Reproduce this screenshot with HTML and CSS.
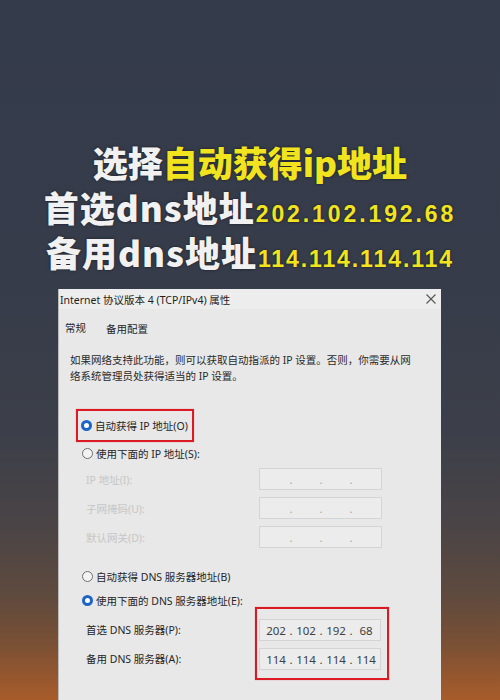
FILE: index.html
```html
<!DOCTYPE html>
<html lang="zh-CN">
<head>
<meta charset="utf-8">
<title>IPv4 属性</title>
<link rel="stylesheet" href="styles.css">
</head>
<body>
<div class="page">
  <header class="headline">
    <p class="line"><span class="w">选择</span><span class="y">自动获得ip地址</span></p>
    <p class="line"><span class="w wide">首选dns地址</span><span class="y num">202.102.192.68</span></p>
    <p class="line"><span class="w wide">备用dns地址</span><span class="y num num15">114.114.114.114</span></p>
  </header>

  <section class="dialog">
    <div class="titlebar">
      <span class="title">Internet 协议版本 4 (TCP/IPv4) 属性</span>
      <svg class="close" width="10" height="10" viewBox="0 0 10 10"><path d="M0.5 0.5L9.5 9.5M9.5 0.5L0.5 9.5" stroke="#555" stroke-width="1.1" fill="none"/></svg>
    </div>
    <div class="tabs">
      <span class="tab">常规</span>
      <span class="tab tab2">备用配置</span>
    </div>
    <p class="desc">如果网络支持此功能，则可以获取自动指派的 IP 设置。否则，你需要从网<br>络系统管理员处获得适当的 IP 设置。</p>

    <div class="hl hl1">
      <div class="radio-row"><span class="radio on"></span><span>自动获得 IP 地址(O)</span></div>
    </div>
    <div class="radio-row r2"><span class="radio"></span><span>使用下面的 IP 地址(S):</span></div>

    <div class="fields">
      <div class="field"><span class="label dis">IP 地址(I):</span><div class="ip dis"><i></i><b>.</b><i></i><b>.</b><i></i><b>.</b><i></i></div></div>
      <div class="field"><span class="label dis">子网掩码(U):</span><div class="ip dis"><i></i><b>.</b><i></i><b>.</b><i></i><b>.</b><i></i></div></div>
      <div class="field"><span class="label dis">默认网关(D):</span><div class="ip dis"><i></i><b>.</b><i></i><b>.</b><i></i><b>.</b><i></i></div></div>
    </div>

    <div class="radio-row r3"><span class="radio"></span><span>自动获得 DNS 服务器地址(B)</span></div>
    <div class="radio-row r4"><span class="radio on"></span><span>使用下面的 DNS 服务器地址(E):</span></div>

    <div class="dns">
      <div class="dns-labels">
        <span class="label">首选 DNS 服务器(P):</span>
        <span class="label">备用 DNS 服务器(A):</span>
      </div>
      <div class="hl hl2">
        <div class="ip"><i>202</i><b>.</b><i>102</i><b>.</b><i>192</i><b>.</b><i>68</i></div>
        <div class="ip"><i>114</i><b>.</b><i>114</i><b>.</b><i>114</i><b>.</b><i>114</i></div>
      </div>
    </div>

    <div class="radio-row r5 faint"><span class="check"></span><span>退出时验证设置(L)</span></div>
  </section>
</div>
</body>
</html>
```

FILE: styles.css
```css
* { box-sizing: border-box; }
html, body { margin: 0; padding: 0; }
body {
  width: 500px;
  height: 700px;
  overflow: hidden;
  font-family: "Noto Sans", "Noto Sans CJK SC", sans-serif;
}
.page {
  width: 500px;
  height: 700px;
  overflow: hidden;
  background: linear-gradient(to bottom,
    #343b4a 0%, #363c4a 40%, #3c3f49 62%, #4a4446 75%,
    #5e4a3e 85%, #7a5035 92%, #a85c2a 100%);
}

/* headline */
.headline {
  padding-top: 139px;
  height: 289px;
  font-family: "Noto Sans CJK SC", sans-serif;
  font-weight: 900;
  text-align: center;
}
.line {
  margin: 0;
  height: 45px;
  line-height: 45px;
  font-size: 35px;
  white-space: nowrap;
  text-shadow: 0 0 3px rgba(0,0,0,.55);
}
.w { color: #f1f1f1; }
.wide { letter-spacing: 1px; }
.y { color: #f1e41f; }
.num {
  font-family: "Liberation Sans", "Noto Sans", sans-serif;
  font-weight: 700;
  font-size: 23px;
  letter-spacing: 2.9px;
  margin-left: 1px;
}
.num15 { letter-spacing: 1.9px; }

/* dialog */
.dialog {
  margin-left: 58px;
  width: 383px;
  height: 411px;
  background: #e8e8e8;
  border-left: 1px solid #b9b9b9;
  font-size: 10.5px;
  color: #262626;
}
.titlebar {
  height: 20px;
  display: flex;
  align-items: center;
  justify-content: space-between;
  padding: 0 5px 0 1px;
  background: #ededed;
}
.title { font-size: 10.5px; color: #1e1e1e; }
.tabs {
  margin-top: 7px;
  height: 22px;
  display: flex;
  align-items: center;
  padding-left: 6px;
}
.tab2 { margin-left: 20px; margin-top: 3px; }
.desc {
  margin: 14px 0 0 11px;
  line-height: 16px;
  color: #2a2a2a;
  white-space: nowrap;
}

.radio-row {
  display: flex;
  align-items: center;
  gap: 3px;
  height: 18px;
  white-space: nowrap;
}
.radio {
  width: 11px;
  height: 11px;
  border-radius: 50%;
  border: 1px solid #6f6f6f;
  background: #f3f3f3;
  flex: none;
}
.radio.on {
  border: 3px solid #1c64c8;
  background: #fff;
}
.check {
  width: 11px;
  height: 11px;
  border: 1px solid #999;
  background: #f3f3f3;
  flex: none;
}

.hl {
  border: 2.5px solid #dc1a24;
}
.hl1 {
  margin: 25px 0 0 17px;
  width: 118px;
  height: 33px;
  padding: 5px 0 0 3px;
  box-shadow: 0 0 1px rgba(220,26,36,.5);
}
.r2 { margin: 2px 0 0 23px; }

.fields { margin-top: 6px; display: flex; flex-direction: column; gap: 7px; }
.field {
  display: flex;
  align-items: center;
  height: 22px;
  padding-left: 27px;
}
.label { width: 173px; flex: none; white-space: nowrap; }
.dis { color: #c6c6c6; }

.ip {
  width: 123px;
  height: 22px;
  border: 1px solid #d4d4d4;
  background: #ececec;
  display: grid;
  grid-template-columns: 22px 8px 22px 8px 22px 8px 22px;
  align-items: center;
  padding-left: 5px;
  font-size: 11.5px;
  color: #404040;
  font-family: "Noto Sans", sans-serif;
}
.ip i, .ip b { font-style: normal; font-weight: 400; text-align: center; }
.ip.dis { color: #c0c0c0; }
.ip.dis b { color: #a8a8a8; }

.r3 { margin: 19px 0 0 23px; }
.r4 { margin: 6px 0 0 23px; }

.dns {
  display: flex;
  margin-top: -2px;
  padding-left: 27px;
  height: 73px;
}
.dns-labels {
  width: 169px;
  flex: none;
  display: flex;
  flex-direction: column;
  gap: 7px;
  padding-top: 12px;
}
.dns-labels .label { height: 22px; line-height: 22px; }
.hl2 {
  width: 134px;
  height: 73px;
  padding: 10px 0 0 2px;
  display: flex;
  flex-direction: column;
  gap: 7px;
  box-shadow: 0 0 1px rgba(220,26,36,.5);
}
.hl2 .ip { width: 122px; }
.r5 { margin: 17px 0 0 27px; }
.faint { color: #bdbdbd; }
```
